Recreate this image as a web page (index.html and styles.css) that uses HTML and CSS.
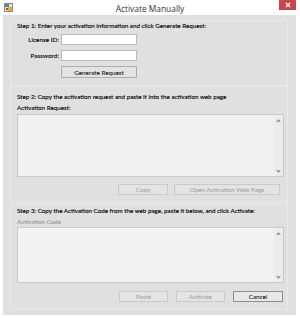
FILE: index.html
```html
<!DOCTYPE html>
<html>
<head>
<meta charset="utf-8">
<link rel="stylesheet" href="styles.css">
</head>
<body>
<div class="window">
  <div class="titlebar">
    <svg class="app-icon" width="9" height="9" viewBox="0 0 9 9">
      <rect x="0.5" y="0.5" width="8" height="8" fill="#e8e4c8" stroke="#8a8a8a" stroke-width="1"/>
      <rect x="1" y="1" width="4" height="3" fill="#5a7fb0"/>
      <rect x="4" y="4" width="4" height="4" fill="#e0b030"/>
      <rect x="2" y="5" width="2" height="2" fill="#c04040"/>
    </svg>
    <div class="title">Activate Manually</div>
    <div class="close">
      <svg width="6" height="6" viewBox="0 0 6 6"><path d="M1 1L5 5M5 1L1 5" stroke="#fff" stroke-width="1.3"/></svg>
    </div>
  </div>
  <div class="content">
    <div class="panel p1">
      <div class="step">Step 1: Enter your activation information and click Generate Request:</div>
      <div class="field-row r1">
        <span class="flabel">License ID:</span>
        <span class="input"></span>
      </div>
      <div class="field-row r2">
        <span class="flabel">Password:</span>
        <span class="input"></span>
      </div>
      <div class="field-row r3">
        <span class="flabel"></span>
        <span class="btn gen">Generate Request</span>
      </div>
    </div>
    <div class="panel p2">
      <div class="step">Step 2: Copy the activation request and paste it into the activation web page</div>
      <div class="sub">Activation Request:</div>
      <div class="area a1">
        <div class="sbar"><span class="arr up"></span><span class="arr down"></span></div>
      </div>
      <div class="btn-row">
        <span class="btn dis copy">Copy</span>
        <span class="btn dis open">Open Activation Web Page</span>
      </div>
    </div>
    <div class="panel p3">
      <div class="step">Step 3: Copy the Activation Code from the web page, paste it below, and click Activate:</div>
      <div class="sub grey">Activation Code</div>
      <div class="area a2">
        <div class="sbar"><span class="arr up"></span><span class="arr down"></span></div>
      </div>
      <div class="btn-row">
        <span class="btn dis paste">Paste</span>
        <span class="btn dis act">Activate</span>
        <span class="btn cancel">Cancel</span>
      </div>
    </div>
  </div>
</div>
</body>
</html>
```

FILE: styles.css
```css
* { box-sizing: border-box; }
html, body { margin: 0; padding: 0; }
body {
  width: 300px;
  height: 318px;
  background: #ffffff;
  font-family: Lato, "Open Sans", sans-serif;
  color: #111111;
  overflow: hidden;
}
.window {
  display: flex;
  flex-direction: column;
  height: 318px;
}
.titlebar {
  height: 15px;
  display: flex;
  align-items: flex-start;
}
.app-icon { margin: 3px 0 0 4px; }
.title {
  flex: 1;
  text-align: center;
  font-family: "Open Sans", sans-serif;
  font-size: 8.4px;
  line-height: 9px;
  margin: 4px 0 0 8px;
  color: #333333;
}
.close {
  width: 17px;
  height: 10px;
  margin-right: 4px;
  background: #c8474d;
  display: flex;
  align-items: center;
  justify-content: center;
}
.content {
  margin: 0 4px 3px 3px;
  height: 300px;
  background: #e0e0e0;
  padding: 5px 8px 0 7px;
  display: flex;
  flex-direction: column;
}
.panel {
  border: 1px solid #e8e8e8;
  padding: 0 4px 0 6px;
  display: flex;
  flex-direction: column;
}
.p1 { height: 66px; padding-top: 1px; }
.p2 { height: 116px; padding-top: 6px; }
.p3 { height: 107px; margin-top: 1px; padding-top: 3px; }
.step {
  font-size: 6.25px;
  line-height: 8px;
  height: 8px;
  white-space: nowrap;
  color: #000000;
  -webkit-text-stroke: 0.12px #000000;
}
.field-row {
  display: flex;
  align-items: center;
  height: 11px;
}
.r1 { margin-top: 4px; }
.r2 { margin-top: 5px; }
.r3 { margin-top: 5px; height: 12px; }
.flabel {
  width: 44px;
  text-align: right;
  font-size: 6.4px;
  padding-right: 2px;
  white-space: nowrap;
  color: #000000;
  -webkit-text-stroke: 0.1px #000000;
}
.input {
  width: 76px;
  height: 11px;
  background: #ffffff;
  border: 1px solid #b9b9b9;
}
.btn {
  display: flex;
  align-items: center;
  justify-content: center;
  height: 11px;
  font-size: 6.3px;
  background: #e3e3e3;
  border: 1px solid #adadad;
  color: #1e1e1e;
  white-space: nowrap;
}
.gen { width: 76px; height: 12px; -webkit-text-stroke: 0.08px #1e1e1e; }
.btn.dis {
  color: #9a9a9a;
  border-color: #c9c9c9;
  background: #e4e4e4;
}
.sub {
  font-size: 6.25px;
  line-height: 8px;
  height: 8px;
  margin-top: 3px;
  color: #000000;
  -webkit-text-stroke: 0.1px #000000;
}
.sub.grey { color: #8a8a8a; -webkit-text-stroke: 0; }
.area {
  margin-top: 2px;
  width: 267px;
  background: #f1f1f1;
  border: 1px solid #c8c8c8;
  display: flex;
  justify-content: flex-end;
}
.a1 { height: 63px; }
.a2 { height: 56px; background: #f2f2f2; }
.sbar {
  width: 9px;
  display: flex;
  flex-direction: column;
  justify-content: space-between;
  align-items: center;
  padding: 4px 0 3px;
  background: #ececec;
}
.arr {
  width: 3px;
  height: 3px;
  border-left: 1px solid #707070;
  border-top: 1px solid #707070;
}
.arr.up { transform: rotate(45deg); margin-top: 1px; }
.arr.down { transform: rotate(225deg); margin-bottom: 1px; }
.btn-row {
  display: flex;
  justify-content: flex-end;
  width: 267px;
  gap: 6px;
  margin-top: 7px;
}
.copy { width: 50px; }
.open { width: 106px; margin-right: 4px; }
.p3 .area { margin-top: 1px; }
.p3 .btn-row { margin-top: 8px; gap: 8px; }
.paste { width: 49px; }
.act { width: 49px; }
.cancel { width: 50px; margin-right: 1px; border-color: #8e8e8e; background: #e8e8e8; -webkit-text-stroke: 0.08px #1e1e1e; }
```
